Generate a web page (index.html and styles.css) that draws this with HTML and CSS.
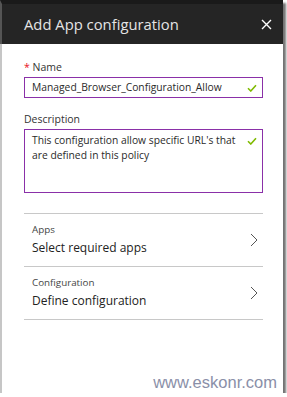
FILE: index.html
```html
<!DOCTYPE html>
<html lang="en">
<head>
    <meta charset="UTF-8">
    <meta name="viewport" content="width=device-width, initial-scale=1.0">
    <title>Add App configuration</title>
    <link rel="stylesheet" href="styles.css">
</head>
<body>
    <div class="blade">
        <div class="blade-header">
            <h1>Add App configuration</h1>
            <svg class="close" width="11" height="11" viewBox="0 0 11 11"><path d="M1 1 L10 10 M10 1 L1 10" stroke="#fff" stroke-width="1.4"/></svg>
        </div>

        <div class="blade-body">
            <div class="field">
                <label class="field-label"><span class="req">*</span> Name</label>
                <div class="input">
                    <span class="input-text">Managed_Browser_Configuration_Allow</span>
                    <svg class="check" width="10" height="8" viewBox="0 0 10 8"><path d="M1 4.2 L3.8 7 L9 1.2" fill="none" stroke="#7fba00" stroke-width="1.6"/></svg>
                </div>
            </div>

            <div class="field">
                <label class="field-label">Description</label>
                <div class="input textarea">
                    <span class="input-text">This configuration allow specific URL's that are defined in this policy</span>
                    <svg class="check" width="10" height="8" viewBox="0 0 10 8"><path d="M1 4.2 L3.8 7 L9 1.2" fill="none" stroke="#7fba00" stroke-width="1.6"/></svg>
                </div>
            </div>

            <div class="nav-list">
                <div class="nav-item">
                    <div>
                        <div class="nav-title">Apps</div>
                        <div class="nav-value">Select required apps</div>
                    </div>
                    <svg class="chevron" width="8" height="14" viewBox="0 0 8 14"><path d="M1 1 L7 7 L1 13" fill="none" stroke="#555" stroke-width="1"/></svg>
                </div>
                <div class="nav-item">
                    <div>
                        <div class="nav-title">Configuration</div>
                        <div class="nav-value">Define configuration</div>
                    </div>
                    <svg class="chevron" width="8" height="14" viewBox="0 0 8 14"><path d="M1 1 L7 7 L1 13" fill="none" stroke="#555" stroke-width="1"/></svg>
                </div>
            </div>

            <div class="watermark">www.eskonr.com</div>
        </div>
    </div>
</body>
</html>
```

FILE: styles.css
```css
body {
    margin: 0;
    background: #fff;
    font-family: 'Open Sans', sans-serif;
}
.blade {
    width: 281px;
    height: 393px;
    border-left: 2px solid #c6c6c6;
    box-shadow: 3px 3px 2px rgba(0,0,0,0.55);
    display: flex;
    flex-direction: column;
    background: white;
}
.blade-header {
    background: #252525;
    border-top: 4px solid #1a1a1a;
    height: 40px;
    display: flex;
    align-items: center;
    justify-content: space-between;
    padding: 0 11px 0 22px;
    margin-left: -2px;
    border-left: 2px solid #555;
}
.blade-header h1 {
    margin: 0;
    color: #e4e4e4;
    font-size: 14.8px;
    font-weight: normal;
}
.blade-body {
    flex: 1;
    padding: 16px 20px 0 22px;
    display: flex;
    flex-direction: column;
}
.field {
    margin-bottom: 14px;
}
.field-label {
    display: block;
    font-size: 10.5px;
    line-height: 14px;
    color: #333;
    margin-bottom: 3px;
}
.req {
    color: #e81123;
}
.input {
    border: 1px solid #8a30a8;
    padding: 2px 5px 2px 7px;
    display: flex;
    justify-content: space-between;
    align-items: flex-start;
    font-size: 10.3px;
    color: #2a2a2a;
    line-height: 15px;
}
.textarea {
    height: 57px;
    padding-top: 3px;
}
.input-text {
    flex: 1;
}
.check {
    margin-top: 4px;
    margin-left: 4px;
}
.nav-list {
    margin-top: 6px;
    border-top: 1px solid #c8c8c8;
}
.nav-item {
    border-bottom: 1px solid #c8c8c8;
    height: 52px;
    padding: 0 5px 0 8px;
    display: flex;
    align-items: center;
    justify-content: space-between;
}
.nav-title {
    font-size: 9.8px;
    line-height: 14px;
    margin-bottom: 2px;
    color: #444;
}
.nav-value {
    font-size: 12px;
    line-height: 18px;
    color: #222;
}
.watermark {
    margin-top: auto;
    margin-bottom: 1px;
    align-self: flex-end;
    font-family: 'Liberation Sans', Arial, sans-serif;
    font-size: 16.5px;
    color: #8a8fa8;
    margin-right: -14px;
}
```
